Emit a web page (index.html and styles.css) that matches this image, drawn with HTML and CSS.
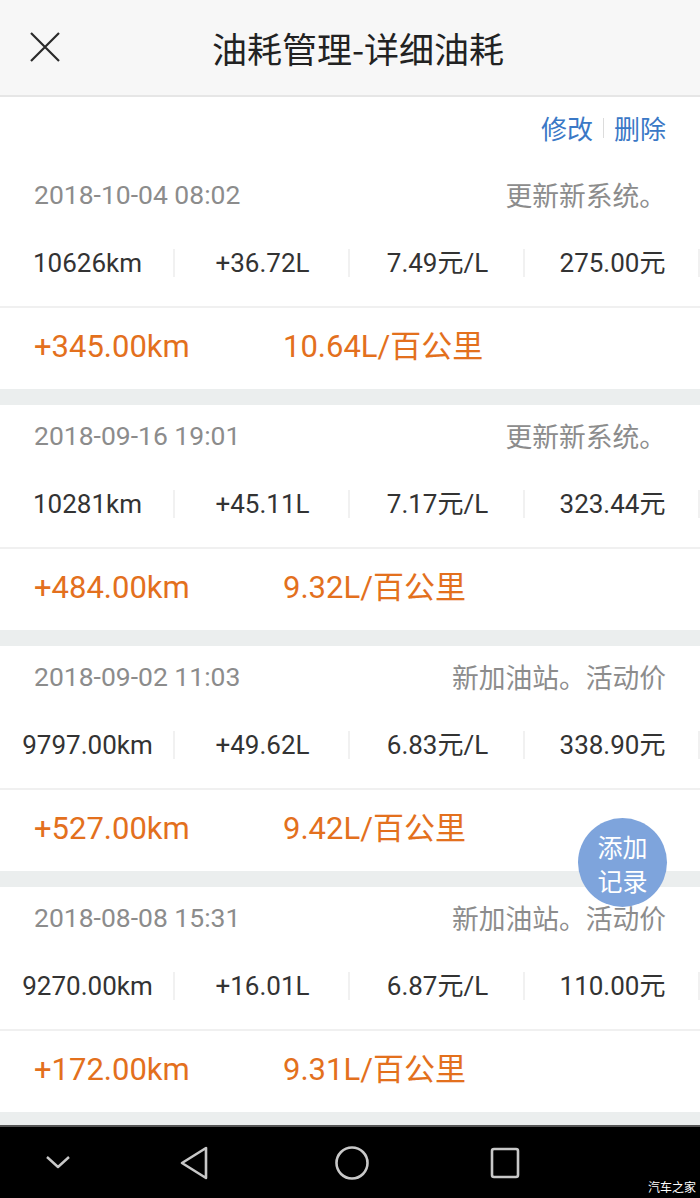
FILE: index.html
```html
<!DOCTYPE html>
<html lang="zh">
<head>
<meta charset="utf-8">
<link rel="stylesheet" href="styles.css">
</head>
<body>
<div class="screen">
  <header class="topbar">
    <svg class="close" width="30" height="30" viewBox="0 0 30 30"><path d="M1 1 L29 29 M29 1 L1 29" stroke="#2a2a2a" stroke-width="2.2" fill="none"/></svg>
    <div class="title">油耗管理-详细油耗</div>
  </header>
  <main class="list">
    <section class="card">
      <div class="actions"><span>修改</span><i class="vsep"></i><span>删除</span></div>
      <div class="meta"><span class="date">2018-10-04 08:02</span><span class="note">更新新系统。</span></div>
      <div class="stats"><span>10626km</span><span>+36.72L</span><span>7.49元/L</span><span>275.00元</span></div>
      <div class="result"><span class="dist">+345.00km</span><span>10.64L/百公里</span></div>
    </section>
    <section class="card">
      <div class="meta"><span class="date">2018-09-16 19:01</span><span class="note">更新新系统。</span></div>
      <div class="stats"><span>10281km</span><span>+45.11L</span><span>7.17元/L</span><span>323.44元</span></div>
      <div class="result"><span class="dist">+484.00km</span><span>9.32L/百公里</span></div>
    </section>
    <section class="card">
      <div class="meta"><span class="date">2018-09-02 11:03</span><span class="note">新加油站。活动价</span></div>
      <div class="stats"><span>9797.00km</span><span>+49.62L</span><span>6.83元/L</span><span>338.90元</span></div>
      <div class="result"><span class="dist">+527.00km</span><span>9.42L/百公里</span></div>
    </section>
    <section class="card">
      <div class="meta"><span class="date">2018-08-08 15:31</span><span class="note">新加油站。活动价</span></div>
      <div class="stats"><span>9270.00km</span><span>+16.01L</span><span>6.87元/L</span><span>110.00元</span></div>
      <div class="result"><span class="dist">+172.00km</span><span>9.31L/百公里</span></div>
    </section>
  </main>
  <nav class="navbar">
    <svg width="26" height="16" viewBox="0 0 26 16"><path d="M2 3 L13 13 L24 3" stroke="#c8c8c8" stroke-width="2.4" fill="none" stroke-linejoin="round"/></svg>
    <svg width="32" height="34" viewBox="0 0 32 34"><path d="M27 2 L27 32 L3 17 Z" stroke="#c8c8c8" stroke-width="2.6" fill="none" stroke-linejoin="round"/></svg>
    <svg width="36" height="36" viewBox="0 0 36 36"><circle cx="18" cy="18" r="15.5" stroke="#c8c8c8" stroke-width="2.6" fill="none"/></svg>
    <svg width="30" height="32" viewBox="0 0 30 32"><rect x="2" y="2" width="26" height="28" rx="2" stroke="#c8c8c8" stroke-width="2.6" fill="none"/></svg>
  </nav>
  <button class="fab">添加<br>记录</button>
  <div class="watermark">汽车之家</div>
</div>
</body>
</html>
```
FILE: styles.css
```css
* { box-sizing: border-box; }
html, body { margin: 0; padding: 0; }
body {
  font-family: Roboto, "Noto Sans CJK SC", sans-serif;
  background: #ebeeee;
}
.screen {
  position: relative;
  width: 700px;
  height: 1198px;
  display: flex;
  flex-direction: column;
  overflow: hidden;
}
.topbar {
  height: 97px;
  flex: none;
  background: #f7f7f7;
  border-bottom: 2px solid #e6e6e6;
  display: flex;
  align-items: center;
  padding-left: 30px;
}
.close { flex: none; margin-top: -2px; }
.title {
  flex: 1;
  text-align: center;
  font-size: 35px;
  color: #222;
  padding-right: 44px;
  margin-top: -1px;
  font-family: "Noto Sans CJK SC", sans-serif;
}
.list {
  flex: 1;
  overflow: hidden;
  display: flex;
  flex-direction: column;
  gap: 16px;
}
.card {
  background: #fff;
  flex: none;
}
.actions {
  height: 67px;
  display: flex;
  justify-content: flex-end;
  align-items: center;
  padding: 0 34px 6px 0;
  font-size: 26px;
  color: #3a78c6;
  font-family: "Noto Sans CJK SC", sans-serif;
}
.vsep {
  width: 1px;
  height: 20px;
  background: #dcdcdc;
  margin: 0 10px;
}
.meta {
  height: 62px;
  display: flex;
  justify-content: space-between;
  align-items: center;
  padding: 0 34px;
  color: #8c8c8c;
  font-size: 26.5px;
  line-height: 32px;
}
.note { font-family: "Noto Sans CJK SC", sans-serif; font-size: 26.75px; }
.stats {
  height: 82px;
  display: grid;
  grid-template-columns: repeat(4, 1fr);
  align-items: center;
  padding-bottom: 6px;
  border-bottom: 2px solid #f0f0f0;
  font-size: 26px;
  line-height: 32px;
  color: #333;
}
.stats span {
  position: relative;
  text-align: center;
}
.stats span::after {
  content: "";
  position: absolute;
  right: 0;
  top: 50%;
  margin-top: -14px;
  width: 2px;
  height: 28px;
  background: #f1f1f1;
}
.result {
  height: 81px;
  display: flex;
  align-items: center;
  padding: 0 0 4px 34px;
  font-size: 31px;
  line-height: 36px;
  color: #e3701d;
}
.dist { width: 249px; }
.navbar {
  height: 73px;
  flex: none;
  background: #000;
  border-top: 2px solid #555;
  display: flex;
  align-items: center;
  padding-left: 45px;
}
.navbar svg:nth-child(1) { margin-right: 108px; margin-top: -2px; }
.navbar svg:nth-child(2) { margin-right: 123px; }
.navbar svg:nth-child(3) { margin-right: 120px; }
.fab {
  position: absolute;
  left: 578px;
  top: 818px;
  width: 89px;
  height: 89px;
  border-radius: 50%;
  border: none;
  background: #7ea4dc;
  color: #fff;
  font-family: "Noto Sans CJK SC", sans-serif;
  font-size: 25px;
  line-height: 34px;
  padding: 0;
}
.watermark {
  position: absolute;
  right: 4px;
  bottom: 3px;
  color: #fff;
  font-size: 12px;
  font-family: "Noto Sans CJK SC", sans-serif;
}
```
